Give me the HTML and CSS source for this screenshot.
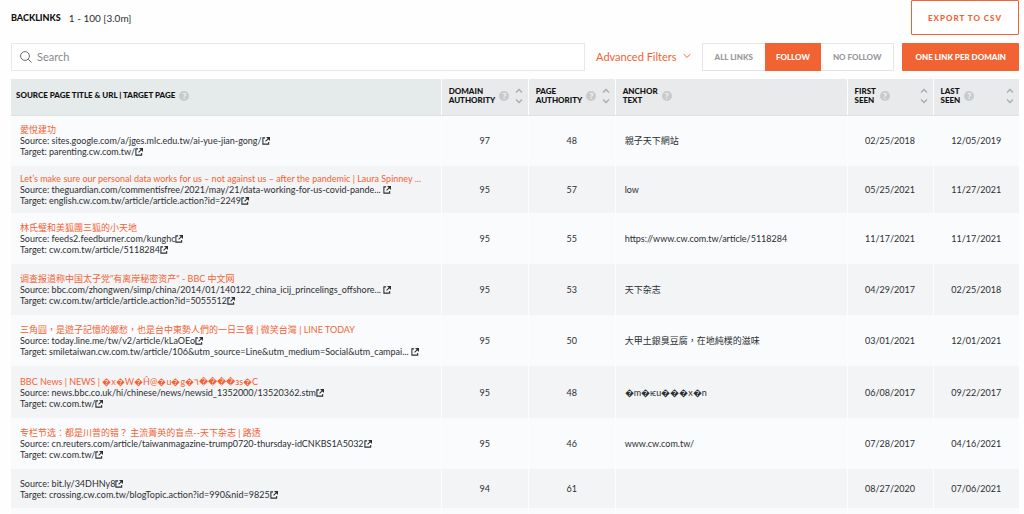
FILE: index.html
```html
<!DOCTYPE html>
<html lang="en">
<head>
<meta charset="utf-8">
<title>Backlinks</title>
<link rel="stylesheet" href="styles.css">
</head>
<body>
<svg class="sprite" aria-hidden="true">
  <symbol id="ext" viewBox="0 0 18 18"><path d="M7 2H2v14h13v-5M15 3L8 10" fill="none" stroke="currentColor" stroke-width="2.400"/><path d="M9 0h9v9z" fill="currentColor"/></symbol>
  <symbol id="sort" viewBox="0 0 8 16"><path d="M1 4.500L4 1.500l3 3M1 11.500l3 3 3-3" fill="none" stroke="currentColor" stroke-width="1.300"/></symbol>
</svg>
<main class="page">
  <header class="top">
    <h1 class="heading">BACKLINKS</h1>
    <span class="range">1 - 100 [3.0m]</span>
    <button class="export" type="button">EXPORT TO CSV</button>
  </header>
  <div class="toolbar">
    <label class="search">
      <svg class="lens" viewBox="0 0 12 12" aria-hidden="true"><circle cx="5" cy="5" r="4.400"/><path d="M8.200 8.200L11.500 11.500"/></svg>
      <input type="text" placeholder="Search" aria-label="Search">
    </label>
    <button class="advanced" type="button">Advanced Filters
      <svg class="chevron" viewBox="0 0 8 6" aria-hidden="true"><path d="M.8 1.200L4 4.500l3.200-3.300"/></svg>
    </button>
    <div class="segments">
      <button type="button">ALL LINKS</button>
      <button type="button" class="active">FOLLOW</button>
      <button type="button">NO FOLLOW</button>
    </div>
    <button class="primary" type="button">ONE LINK PER DOMAIN</button>
  </div>
  <table class="links">
    <colgroup><col><col class="c-num"><col class="c-num"><col class="c-anchor"><col class="c-date"><col class="c-date"></colgroup>
    <thead>
      <tr>
        <th scope="col"><div class="head"><span>SOURCE PAGE TITLE &amp; URL | TARGET PAGE</span><i class="help">?</i></div></th>
        <th scope="col"><div class="head"><span>DOMAIN<br>AUTHORITY</span><i class="help">?</i><svg class="sort"><use href="#sort"/></svg></div></th>
        <th scope="col"><div class="head"><span>PAGE<br>AUTHORITY</span><i class="help">?</i><svg class="sort"><use href="#sort"/></svg></div></th>
        <th scope="col"><div class="head"><span>ANCHOR<br>TEXT</span><i class="help">?</i></div></th>
        <th scope="col"><div class="head"><span>FIRST<br>SEEN</span><i class="help">?</i><svg class="sort"><use href="#sort"/></svg></div></th>
        <th scope="col"><div class="head"><span>LAST<br>SEEN</span><i class="help">?</i><svg class="sort"><use href="#sort"/></svg></div></th>
      </tr>
    </thead>
    <tbody>
      <tr>
        <td><a class="title" href="#">愛悅建功</a><p>Source: sites.google.com/a/jges.mlc.edu.tw/ai-yue-jian-gong/<svg class="ext"><use href="#ext"/></svg></p><p>Target: parenting.cw.com.tw/<svg class="ext"><use href="#ext"/></svg></p></td>
        <td>97</td><td>48</td><td>親子天下網站</td><td>02/25/2018</td><td>12/05/2019</td>
      </tr>
      <tr class="latin">
        <td><a class="title" href="#">Let’s make sure our personal data works for us – not against us – after the pandemic | Laura Spinney ...</a><p>Source: theguardian.com/commentisfree/2021/may/21/data-working-for-us-covid-pande... <svg class="ext"><use href="#ext"/></svg></p><p>Target: english.cw.com.tw/article/article.action?id=2249<svg class="ext"><use href="#ext"/></svg></p></td>
        <td>95</td><td>57</td><td>low</td><td>05/25/2021</td><td>11/27/2021</td>
      </tr>
      <tr>
        <td><a class="title" href="#">林氏璧和美狐團三狐的小天地</a><p>Source: feeds2.feedburner.com/kunghc<svg class="ext"><use href="#ext"/></svg></p><p>Target: cw.com.tw/article/5118284<svg class="ext"><use href="#ext"/></svg></p></td>
        <td>95</td><td>55</td><td>https://www.cw.com.tw/article/5118284</td><td>11/17/2021</td><td>11/17/2021</td>
      </tr>
      <tr>
        <td><a class="title" href="#" lang="zh-Hans">调查报道称中国太子党"有离岸秘密资产" - BBC 中文网</a><p>Source: bbc.com/zhongwen/simp/china/2014/01/140122_china_icij_princelings_offshore... <svg class="ext"><use href="#ext"/></svg></p><p>Target: cw.com.tw/article/article.action?id=5055512<svg class="ext"><use href="#ext"/></svg></p></td>
        <td>95</td><td>53</td><td lang="zh-Hans">天下杂志</td><td>04/29/2017</td><td>02/25/2018</td>
      </tr>
      <tr>
        <td><a class="title" href="#">三角圓，是遊子記憶的鄉愁，也是台中東勢人們的一日三餐 | 微笑台灣 | LINE TODAY</a><p>Source: today.line.me/tw/v2/article/kLaOEo<svg class="ext"><use href="#ext"/></svg></p><p>Target: smiletaiwan.cw.com.tw/article/106&amp;utm_source=Line&amp;utm_medium=Social&amp;utm_campai... <svg class="ext"><use href="#ext"/></svg></p></td>
        <td>95</td><td>50</td><td>大甲土銀臭豆腐，在地純樸的滋味</td><td>03/01/2021</td><td>12/01/2021</td>
      </tr>
      <tr class="mixed">
        <td><a class="title" href="#">BBC News | NEWS | �x�W�Ĥ@�u�g�٦����зs�C</a><p>Source: news.bbc.co.uk/hi/chinese/news/newsid_1352000/13520362.stm<svg class="ext"><use href="#ext"/></svg></p><p>Target: cw.com.tw/<svg class="ext"><use href="#ext"/></svg></p></td>
        <td>95</td><td>48</td><td>�m�ѥu���x�n</td><td>06/08/2017</td><td>09/22/2017</td>
      </tr>
      <tr>
        <td><a class="title" href="#">专栏节选：都是川普的错？ 主流菁英的盲点--天下杂志 | 路透</a><p>Source: cn.reuters.com/article/taiwanmagazine-trump0720-thursday-idCNKBS1A5032<svg class="ext"><use href="#ext"/></svg></p><p>Target: cw.com.tw/<svg class="ext"><use href="#ext"/></svg></p></td>
        <td>95</td><td>46</td><td>www.cw.com.tw/</td><td>07/28/2017</td><td>04/16/2021</td>
      </tr>
      <tr class="untitled">
        <td><p>Source: bit.ly/34DHNy8<svg class="ext"><use href="#ext"/></svg></p><p>Target: crossing.cw.com.tw/blogTopic.action?id=990&amp;nid=9825<svg class="ext"><use href="#ext"/></svg></p></td>
        <td>94</td><td>61</td><td></td><td>08/27/2020</td><td>07/06/2021</td>
      </tr>
      <tr class="end"><td></td><td></td><td></td><td></td><td></td><td></td></tr>
    </tbody>
  </table>
</main>
</body>
</html>
```
FILE: styles.css
```css
* { box-sizing: border-box; }
body {
  margin: 0;
  background: #fefefe;
  color: #2c2e31;
  font-family: Lato, "Noto Sans CJK TC", sans-serif;
  font-size: 9px;
}
button, input { font: inherit; }
button { cursor: pointer; white-space: nowrap; }
.sprite { display: none; }
.page { padding: 0 5px 0 11px; }
.top { display: flex; align-items: center; gap: 8px; height: 35px; }
.heading { margin: 0; font-size: 9px; font-weight: 900; color: #111; }
.range { font-size: 10px; }
.export {
  margin-left: auto;
  height: 35px;
  padding: 0 16px;
  border: 1px solid #f26333;
  border-radius: 1px;
  background: #fff;
  color: #f26333;
  font-size: 8px;
  font-weight: 900;
  letter-spacing: 1px;
}
.toolbar { display: flex; align-items: center; height: 28px; margin: 8px 0; }
.search {
  flex: 1;
  display: flex;
  align-items: center;
  gap: 5px;
  height: 28px;
  padding: 0 8px;
  border: 1px solid #e6e8e9;
  background: #fff;
}
.search input { flex: 1; border: 0; padding: 0 0 2px; outline: 0; background: none; font-size: 11px; }
.search input::placeholder { color: #85888b; opacity: 1; }
.lens { width: 12px; height: 12px; fill: none; stroke: #66696c; }
.advanced {
  display: flex;
  align-items: center;
  gap: 6px;
  margin: 0 11px;
  padding: 0 0 2px;
  border: 0;
  background: none;
  color: #f26333;
  font-size: 11px;
}
.chevron { width: 8px; height: 6px; fill: none; stroke: currentColor; }
.segments { display: flex; height: 28px; margin-right: 8px; border: 1px solid #e3e5e6; }
.segments button {
  padding: 0 12px;
  border: 0;
  background: #fff;
  color: #96999c;
  font-size: 8px;
  font-weight: 900;
}
.segments .active { margin: -1px 0; padding: 0 11px; background: #f26333; color: #fff; }
.primary {
  height: 28px;
  padding: 0 13px;
  border: 0;
  border-radius: 1px;
  background: #f26333;
  color: #fff;
  font-size: 8px;
  font-weight: 900;
}
.links { width: 100%; table-layout: fixed; border-collapse: collapse; }
.c-num { width: 87px; }
.c-anchor { width: 23%; }
.c-date { width: 86px; }
.links th {
  height: 36px;
  padding: 0 5px 2px 7px;
  background: #e8eaeb;
  border-bottom: 1px solid #dfe2e3;
  color: #111;
  font-size: 8px;
  font-weight: 900;
  line-height: 9px;
  text-align: left;
}
.links th:first-child { background: #e5eaea; padding-left: 5px; }
.links th + th, .links td + td { border-left: 1px solid #fcfdfd; }
.head { display: flex; align-items: center; gap: 4px; }
.help {
  flex: none;
  width: 10px;
  height: 10px;
  border-radius: 50%;
  background: #c8cbcc;
  color: #f4f5f5;
  font-size: 8px;
  font-style: normal;
  line-height: 10px;
  text-align: center;
}
.sort { flex: none; width: 8px; height: 16px; margin-left: auto; color: #a4aeae; }
.links td { height: 51px; padding: 0 9px; background: #fafbfd; font-size: 9px; line-height: 11px; white-space: nowrap; }
.links tbody tr:nth-child(even) td { background: #f3f4f6; }
.links .latin td { height: 47px; }
.links .mixed td { height: 52px; }
.links .untitled td { height: 39px; }
.links .end td { height: 6px; }
.links td:nth-child(2), .links td:nth-child(3), .links td:nth-child(n+5) { padding: 0; text-align: center; }
.links td p { margin: 0; }
.title { display: block; height: 11px; color: #f26333; text-decoration: none; }
.ext { width: 8px; height: 8px; vertical-align: -1px; }
[lang="zh-Hans"] { font-family: Lato, "Noto Sans CJK SC", sans-serif; }
```
